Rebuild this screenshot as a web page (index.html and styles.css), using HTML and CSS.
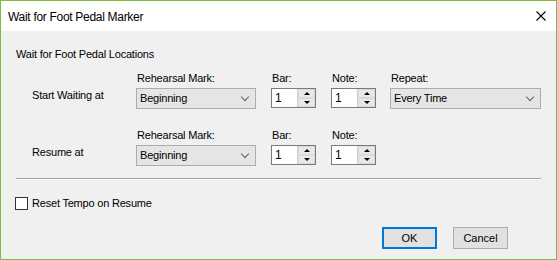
FILE: index.html
```html
<!DOCTYPE html>
<html>
<head>
    <title>Wait for Foot Pedal Marker</title>
    <link rel="stylesheet" href="styles.css">
</head>
<body>
    <div class="window">
        <div class="titlebar">
            <span class="title">Wait for Foot Pedal Marker</span>
            <svg class="close" width="10" height="10" viewBox="0 0 10 10">
                <path d="M0.5 0.5 L9.5 9.5 M9.5 0.5 L0.5 9.5" stroke="#000" stroke-width="1.1" fill="none"/>
            </svg>
        </div>

        <div class="dialog">
            <div class="group-title">Wait for Foot Pedal Locations</div>

            <div class="loc-row">
                <div class="row-label">Start Waiting at</div>
                <div class="caption col-mark">Rehearsal Mark:</div>
                <div class="caption col-bar">Bar:</div>
                <div class="caption col-note">Note:</div>
                <div class="caption col-repeat">Repeat:</div>
                <div class="combo mark col-mark"><span>Beginning</span><span class="chev"></span></div>
                <div class="spin col-bar"><span class="edit">1</span><span class="arrows"><span class="up"></span><span class="down"></span></span></div>
                <div class="spin col-note"><span class="edit">1</span><span class="arrows"><span class="up"></span><span class="down"></span></span></div>
                <div class="combo repeat col-repeat"><span>Every Time</span><span class="chev"></span></div>
            </div>

            <div class="loc-row second">
                <div class="row-label">Resume at</div>
                <div class="caption col-mark">Rehearsal Mark:</div>
                <div class="caption col-bar">Bar:</div>
                <div class="caption col-note">Note:</div>
                <div class="combo mark col-mark"><span>Beginning</span><span class="chev"></span></div>
                <div class="spin col-bar"><span class="edit">1</span><span class="arrows"><span class="up"></span><span class="down"></span></span></div>
                <div class="spin col-note"><span class="edit">1</span><span class="arrows"><span class="up"></span><span class="down"></span></span></div>
            </div>

            <div class="separator"></div>

            <label class="check-row"><span class="checkbox"></span>Reset Tempo on Resume</label>

            <div class="buttons">
                <button class="btn default">OK</button>
                <button class="btn">Cancel</button>
            </div>
        </div>
    </div>
</body>
</html>
```

FILE: styles.css
```css
body { margin: 0; font-family: "Liberation Sans", Arial, sans-serif; font-size: 11px; letter-spacing: -0.2px; color: #000; }
.window { width: 557px; height: 260px; box-sizing: border-box; border: 1px solid #83b93b; background: #f0f0f0; display: flex; flex-direction: column; }
.titlebar { height: 30px; background: #fff; display: flex; align-items: center; justify-content: space-between; padding: 0 10px 0 7px; flex-shrink: 0; }
.title { font-size: 12px; letter-spacing: -0.3px; padding-top: 1px; }
.dialog { padding: 17px 0 0 15px; }
.group-title { line-height: 13px; }
.loc-row { display: grid; grid-template-columns: 104px 135px 60px 59px 151px; grid-template-rows: 13px 21px; row-gap: 3px; margin-top: 11px; padding-left: 16px; line-height: 13px; }
.loc-row.second { margin-top: 20px; }
.row-label { grid-row: 2; grid-column: 1; padding-top: 1px; }
.caption { grid-row: 1; padding-left: 1px; }
.col-mark { grid-column: 2; }
.col-bar { grid-column: 3; }
.col-note { grid-column: 4; }
.col-repeat { grid-column: 5; }
.combo { grid-row: 2; box-sizing: border-box; height: 21px; background: #e5e5e5; border: 1px solid #adadad; display: flex; align-items: center; justify-content: space-between; padding: 0 5px 0 3px; }
.combo.mark { width: 120px; }
.combo.repeat { width: 151px; }
.chev { width: 5px; height: 5px; border-right: 1px solid #606060; border-bottom: 1px solid #606060; transform: rotate(45deg); margin-top: -4px; margin-right: 2px; }
.spin { grid-row: 2; width: 45px; height: 20px; box-sizing: border-box; border: 1px solid #7a7a7a; background: #fff; display: flex; }
.edit { flex: 1; padding: 3px 0 0 3px; font-size: 12px; }
.arrows { width: 17px; border-left: 1px solid #cfcfcf; display: flex; flex-direction: column; background: #f0f0f0; }
.arrows span { flex: 1; display: flex; align-items: center; justify-content: center; border: 1px solid #d9d9d9; background: #e8e8e8; }
.up::before { content: ""; border-left: 3px solid transparent; border-right: 3px solid transparent; border-bottom: 3px solid #000; }
.down::before { content: ""; border-left: 3px solid transparent; border-right: 3px solid transparent; border-top: 3px solid #000; }
.separator { margin-top: 12px; width: 525px; border-top: 1px solid #a0a0a0; border-bottom: 1px solid #fff; }
.check-row { display: flex; align-items: center; gap: 4px; margin: 17px 0 0 -1px; height: 13px; line-height: 13px; }
.checkbox { width: 13px; height: 13px; box-sizing: border-box; border: 1px solid #333; background: #fff; }
.buttons { display: flex; justify-content: flex-end; gap: 16px; margin-top: 17px; padding-right: 48px; }
.btn { width: 55px; height: 22px; box-sizing: border-box; background: #e1e1e1; border: 1px solid #adadad; font-family: "Liberation Sans", Arial, sans-serif; font-size: 11px; padding: 0; color: #000; }
.btn.default { border: 2px solid #0078d7; }
```
